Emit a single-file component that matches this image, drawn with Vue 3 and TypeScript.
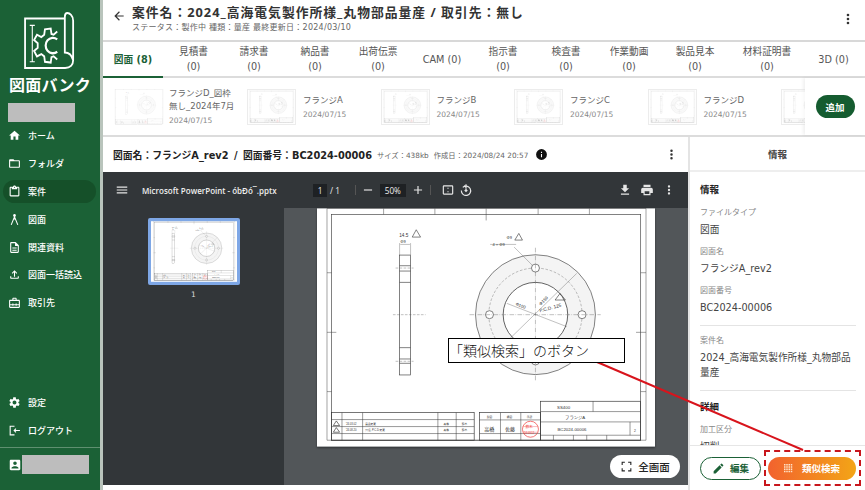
<script setup lang="ts">
interface NavItem {
  label: string
  icon: string
  active?: boolean
}

const navTop: NavItem[] = [
  { label: 'ホーム', icon: 'M10 20v-6h4v6h5v-8h3L12 3 2 12h3v8z' },
  { label: 'フォルダ', icon: 'M20 6h-8l-2-2H4c-1.1 0-1.99.9-1.99 2L2 18c0 1.1.9 2 2 2h16c1.1 0 2-.9 2-2V8c0-1.1-.9-2-2-2zm0 12H4V8h16v10z' },
  { label: '案件', active: true, icon: 'M19 3h-4.18C14.4 1.84 13.3 1 12 1s-2.4.84-2.82 2H5c-1.1 0-2 .9-2 2v14c0 1.1.9 2 2 2h14c1.1 0 2-.9 2-2V5c0-1.1-.9-2-2-2zm-7 0c.55 0 1 .45 1 1s-.45 1-1 1-1-.45-1-1 .45-1 1-1zm7 16H5V5h2v3h10V5h2v14z' },
  { label: '図面', icon: 'M12 2a2.6 2.6 0 0 0-1 5L5 21.5l1.8.8L11 12h2l4.2 10.3 1.8-.8L13 7a2.6 2.6 0 0 0-1-5z' },
  { label: '関連資料', icon: 'M8 16h8v2H8zm0-4h8v2H8zm6-10H6c-1.1 0-2 .9-2 2v16c0 1.1.89 2 1.99 2H18c1.1 0 2-.9 2-2V8l-6-6zm4 18H6V4h7v5h5v11z' },
  { label: '図面一括読込', icon: 'M18 15v3H6v-3H4v3c0 1.1.9 2 2 2h12c1.1 0 2-.9 2-2v-3h-2zM7 9l1.41 1.41L11 7.83V16h2V7.83l2.59 2.58L17 9l-5-5-5 5z' },
  { label: '取引先', icon: 'M20 7h-4V5c0-1.1-.9-2-2-2h-4c-1.1 0-2 .9-2 2v2H4c-1.1 0-2 .9-2 2v11c0 1.1.9 2 2 2h16c1.1 0 2-.9 2-2V9c0-1.1-.9-2-2-2zM10 5h4v2h-4V5zm10 15H4v-3h4v1h2v-1h4v1h2v-1h4v3zm0-5h-4v-1h-2v1h-4v-1H8v1H4V9h16v6z' },
]

const navBottom: NavItem[] = [
  { label: '設定', icon: 'M19.14 12.94c.04-.3.06-.61.06-.94 0-.32-.02-.64-.07-.94l2.03-1.58c.18-.14.23-.41.12-.61l-1.92-3.32c-.12-.22-.37-.29-.59-.22l-2.39.96c-.5-.38-1.03-.7-1.62-.94l-.36-2.54c-.04-.24-.24-.41-.48-.41h-3.84c-.24 0-.43.17-.47.41l-.36 2.54c-.59.24-1.13.57-1.62.94l-2.39-.96c-.22-.08-.47 0-.59.22L2.74 8.87c-.12.21-.08.47.12.61l2.03 1.58c-.05.3-.09.63-.09.94s.02.64.07.94l-2.03 1.58c-.18.14-.23.41-.12.61l1.92 3.32c.12.22.37.29.59.22l2.39-.96c.5.38 1.03.7 1.62.94l.36 2.54c.05.24.24.41.48.41h3.84c.24 0 .44-.17.47-.41l.36-2.54c.59-.24 1.13-.56 1.62-.94l2.39.96c.22.08.47 0 .59-.22l1.92-3.32c.12-.22.07-.47-.12-.61l-2.01-1.58zM12 15.6c-1.98 0-3.6-1.62-3.6-3.6s1.62-3.6 3.6-3.6 3.6 1.62 3.6 3.6-1.62 3.6-3.6 3.6z' },
  { label: 'ログアウト', icon: 'M3 3h9v2H5v14h7v2H3zM14 8l1.4 1.4-1.6 1.6H22v2h-8.2l1.6 1.6L14 16l-4-4z' },
]

const tabs = [
  { label: '図面 (8)', width: 60, active: true },
  { label: '見積書', count: '(0)', width: 61 },
  { label: '請求書', count: '(0)', width: 60 },
  { label: '納品書', count: '(0)', width: 62 },
  { label: '出荷伝票', count: '(0)', width: 64 },
  { label: 'CAM (0)', width: 64 },
  { label: '指示書', count: '(0)', width: 58 },
  { label: '検査書', count: '(0)', width: 68 },
  { label: '作業動画', count: '(0)', width: 58 },
  { label: '製品見本', count: '(0)', width: 74 },
  { label: '材料証明書', count: '(0)', width: 70 },
  { label: '3D (0)', width: 63 },
]

const thumbs = [
  { name: 'フランジD_図枠無し_2024年7月', date: '2024/07/15', bare: true },
  { name: 'フランジA', date: '2024/07/15' },
  { name: 'フランジB', date: '2024/07/15' },
  { name: 'フランジC', date: '2024/07/15' },
  { name: 'フランジD', date: '2024/07/15' },
  { name: '', date: '' },
]

const infoRows = [
  { label: 'ファイルタイプ', value: '図面' },
  { label: '図面名', value: 'フランジA_rev2' },
  { label: '図面番号', value: 'BC2024-00006' },
]
</script>

<template>
  <div class="app">
    <aside class="side">
      <svg class="logo" viewBox="3 3 166 168" preserveAspectRatio="none" fill="none" stroke="#fff" stroke-width="5">
        <path d="M127 30H17V158H128C142 158 150 150 150 138V36C150 22 140 16 134 16C130 16 127 20 127 26V118C136 118 146 124 150 138" />
        <path d="M30 48h14M37 48V142M30 142h14" stroke-width="3" />
        <path d="M106 64L96 72L90 70L88 56L72 58L70 72L62 78L50 72L42 86L52 94L52 106L42 114L50 128L62 122L70 128L72 142L88 144L90 130L96 128L106 136" />
        <path d="M106 84A20 20 0 1 0 106 116" stroke-width="6" />
      </svg>
      <div class="brand">図面バンク</div>
      <div class="mask mask-org"></div>
      <nav class="nav">
        <a v-for="item in navTop" :key="item.label" class="nav-item" :class="{ 'nav-item--active': item.active }">
          <svg viewBox="0 0 24 24" class="nav-icon"><path :d="item.icon" /></svg>
          <span>{{ item.label }}</span>
        </a>
      </nav>
      <nav class="nav nav-bottom">
        <a v-for="item in navBottom" :key="item.label" class="nav-item">
          <svg viewBox="0 0 24 24" class="nav-icon"><path :d="item.icon" /></svg>
          <span>{{ item.label }}</span>
        </a>
      </nav>
      <div class="user">
        <svg viewBox="0 0 24 24" class="user-icon"><path d="M19 3H5c-1.1 0-2 .9-2 2v14c0 1.1.9 2 2 2h14c1.1 0 2-.9 2-2V5c0-1.1-.9-2-2-2zm-7 3c1.65 0 3 1.35 3 3s-1.35 3-3 3-3-1.35-3-3 1.35-3 3-3zm6 12H6v-.75c0-2 4-3.1 6-3.1s6 1.1 6 3.1V18z" /></svg>
        <div class="mask mask-user"></div>
      </div>
    </aside>

    <main class="main">
      <header class="head">
        <svg class="back" viewBox="0 0 24 24"><path d="M20 11H7.83l5.59-5.59L12 4l-8 8 8 8 1.41-1.41L7.83 13H20z" /></svg>
        <div class="head-text">
          <h1>案件名：2024_高海電気製作所様_丸物部品量産 / 取引先：無し</h1>
          <p>ステータス：製作中 種類：量産 最終更新日：2024/03/10</p>
        </div>
        <svg class="kebab" viewBox="0 0 24 24"><path d="M12 8a2 2 0 1 0 0-4 2 2 0 0 0 0 4zm0 2a2 2 0 1 0 0 4 2 2 0 0 0 0-4zm0 6a2 2 0 1 0 0 4 2 2 0 0 0 0-4z" /></svg>
      </header>

      <div class="tabs">
        <div
          v-for="tab in tabs"
          :key="tab.label"
          class="tab"
          :class="{ 'tab--active': tab.active }"
          :style="{ width: tab.width + 'px' }"
        >
          <span>{{ tab.label }}</span>
          <span v-if="tab.count">{{ tab.count }}</span>
        </div>
      </div>

      <div class="thumbs">
        <div class="thumb-list">
          <div v-for="(t, i) in thumbs" :key="i" class="thumb" :class="{ 'thumb--bare': t.bare }">
            <svg class="thumb-img" viewBox="20 10 1015 715"><use href="#sheet" /></svg>
            <div class="thumb-text">
              <div class="thumb-name">{{ t.name }}</div>
              <div class="thumb-date">{{ t.date }}</div>
            </div>
          </div>
        </div>
        <div class="add-zone"><button class="add">追加</button></div>
      </div>

      <div class="work">
        <section class="doc">
          <div class="doc-head">
            <strong>図面名：フランジA_rev2 / 図面番号：BC2024-00006</strong>
            <span class="doc-meta">サイズ：438kb</span>
            <span class="doc-meta">作成日：2024/08/24 20:57</span>
            <svg class="info-icon" viewBox="0 0 24 24"><path d="M12 2a10 10 0 1 0 0 20 10 10 0 0 0 0-20zm1 15h-2v-6h2zm0-8h-2V7h2z" /></svg>
            <svg class="doc-kebab" viewBox="0 0 24 24"><path d="M12 8a2 2 0 1 0 0-4 2 2 0 0 0 0 4zm0 2a2 2 0 1 0 0 4 2 2 0 0 0 0-4zm0 6a2 2 0 1 0 0 4 2 2 0 0 0 0-4z" /></svg>
          </div>

          <div class="viewer">
            <div class="pdf-bar">
              <svg class="pdf-icon pdf-menu" viewBox="0 0 24 24"><path d="M3 18h18v-2H3zm0-5h18v-2H3zm0-7v2h18V6z" /></svg>
              <span class="pdf-title">Microsoft PowerPoint - óbÐó¯.pptx</span>
              <span class="pdf-box pdf-page">1</span>
              <span class="pdf-of">/ 1</span>
              <i class="pdf-sep"></i>
              <svg class="pdf-icon" viewBox="0 0 24 24"><path d="M5 11h14v2H5z" /></svg>
              <span class="pdf-box pdf-zoom">50%</span>
              <svg class="pdf-icon" viewBox="0 0 24 24"><path d="M19 13h-6v6h-2v-6H5v-2h6V5h2v6h6z" /></svg>
              <i class="pdf-sep"></i>
              <svg class="pdf-icon pdf-fit" viewBox="0 0 24 24"><path d="M19 4H5a2 2 0 0 0-2 2v12a2 2 0 0 0 2 2h14a2 2 0 0 0 2-2V6a2 2 0 0 0-2-2zm0 14H5V6h14zM11 8h2v2h-2zM11 14h2v2h-2z" /></svg>
              <svg class="pdf-icon pdf-rotate" viewBox="0 0 24 24"><path d="M6.500 7.500A8 8 0 1 1 4 13" /><path d="M12 2v8M9 4.500l3 3" /><path class="rotate-dot" d="M12 10l3 3-3 3-3-3z" /></svg>
              <span class="pdf-gap"></span>
              <svg class="pdf-icon pdf-end" viewBox="0 0 24 24"><path d="M19 9h-4V3H9v6H5l7 7zM5 18v2h14v-2z" /></svg>
              <svg class="pdf-icon pdf-end" viewBox="0 0 24 24"><path d="M19 8H5a3 3 0 0 0-3 3v6h4v4h12v-4h4v-6a3 3 0 0 0-3-3zm-3 11H8v-5h8zM18 3H6v4h12z" /></svg>
              <svg class="pdf-icon pdf-end" viewBox="0 0 24 24"><path d="M12 8a2 2 0 1 0 0-4 2 2 0 0 0 0 4zm0 2a2 2 0 1 0 0 4 2 2 0 0 0 0-4zm0 6a2 2 0 1 0 0 4 2 2 0 0 0 0-4z" /></svg>
            </div>
            <div class="pdf-body">
              <div class="pdf-side">
                <div class="pdf-thumb">
                  <svg viewBox="20 10 1015 715"><use href="#sheet" /></svg>
                </div>
                <span>1</span>
              </div>
              <div class="pdf-canvas">
                <svg class="sheet" viewBox="20 10 1015 715">
                  <defs>
                    <g id="sheet">
                      <rect x="20" y="10" width="1015" height="715" fill="#fff" />
                      <g fill="none" stroke="#444" stroke-width="2">
                        <rect x="64" y="28" width="928" height="678" />
                        <path d="M50 10v696M50 10h958v696H50M220 10v18M374 10v18M528 10v36M684 10v18M838 10v18M50 203h14M50 382h28M50 560h14M992 203h16M978 382h30M992 560h16" stroke-width="1.500" />
                        <rect x="268" y="150" width="33" height="360" />
                        <path d="M268 182h33M268 198h33M268 232h33M268 428h33M268 462h33M268 475h33" />
                        <path d="M248 329h98M256 189h54M256 469h54" stroke-dasharray="8 4" stroke-width="1" />
                        <path d="M268 150v-36M301 150v-36M270 118h29" stroke-width="1" />
                        <circle cx="676" cy="329" r="180" fill="#f4f4f4" />
                        <circle cx="676" cy="329" r="97" fill="#fff" stroke-width="2.500" />
                        <circle cx="676" cy="329" r="140" stroke-dasharray="8 5" stroke-width="1" />
                        <circle cx="676" cy="189" r="12" fill="#fff" />
                        <circle cx="816" cy="329" r="12" fill="#fff" />
                        <circle cx="538" cy="329" r="12" fill="#fff" />
                        <circle cx="676" cy="468" r="12" fill="#fff" />
                        <path d="M676 128v400M478 329h394" stroke-dasharray="14 4 2 4" stroke-width="1" />
                        <path d="M612 126l54 54M800 205L600 400M590 295l180 70M540 118h78" stroke-width="1" />
                        <path d="M306 96l12-22 13 22zM614 105l12-20 11 20zM735 285l15-20 16 20z" />
                      </g>
                      <g font-family="Liberation Sans, sans-serif" fill="#333">
                        <text x="267" y="95" font-size="14">14.5</text>
                        <text x="270" y="114" font-size="12">Φ9</text>
                        <text x="589" y="103" font-size="12">Φ9</text>
                        <text x="547" y="123" font-size="12">4 × Φ9</text>
                        <text x="615" y="300" font-size="13" transform="rotate(22 615 300)">Φ100</text>
                        <text x="692" y="302" font-size="13" transform="rotate(-45 692 302)">Φ150</text>
                        <text x="690" y="322" font-size="14" transform="rotate(-15 690 322)">P.C.D. 125</text>
                      </g>
                      <g fill="none" stroke="#333" stroke-width="2">
                        <rect x="64" y="623" width="428" height="83" />
                        <path d="M64 644h428M64 665h428M64 686h428M95 623v83M157 623v83M383 623v83M438 623v83" stroke-width="1.500" />
                        <rect x="508" y="623" width="183" height="83" />
                        <path d="M508 645h183M508 686h183M571 623v83M632 623v83" stroke-width="1.500" />
                        <rect x="691" y="589" width="300" height="117" />
                        <path d="M691 620h300M691 651h300M691 691h300M849 589v31M960 651v40M730 691v15M790 691v15M830 691v15M890 691v15" stroke-width="1.500" />
                        <path d="M69 662l9-14 10 14zM69 682l9-14 10 14z" />
                        <circle cx="661" cy="673" r="24" stroke="#e33" />
                        <path d="M639 665h44M639 682h44" stroke="#e33" stroke-width="1" />
                      </g>
                      <g font-family="Liberation Sans, Noto Sans CJK JP, sans-serif" fill="#333" font-size="8">
                        <text x="106" y="659">'24.03.02</text>
                        <text x="165" y="659">異品変更</text>
                        <text x="106" y="678">'24.08.20</text>
                        <text x="165" y="678">穴径, P.C.D.変更</text>
                        <text x="400" y="659">高橋</text><text x="455" y="659">鈴木</text>
                        <text x="400" y="678">高橋</text><text x="455" y="678">鈴木</text>
                        <text x="530" y="640">製図</text><text x="590" y="640">検図</text><text x="650" y="640">承認</text>
                        <text x="522" y="677" font-size="15">高橋</text>
                        <text x="585" y="677" font-size="15">佐藤</text>
                        <text x="646" y="670" font-size="11" fill="#e33">鈴木</text>
                        <text x="640" y="686" font-size="8" fill="#e33">'24.03.12</text>
                        <text x="741" y="612" font-size="13">SS400</text>
                        <text x="765" y="641" font-size="13">フランジA</text>
                        <text x="742" y="677" font-size="13">BC2024-00006</text>
                        <text x="972" y="681" font-size="10">2</text>
                      </g>
                    </g>
                  </defs>
                  <use href="#sheet" />
                </svg>
              </div>
            </div>
            <button class="full">
              <svg viewBox="0 0 24 24"><path d="M3 9V3h6v2H5v4zM15 3h6v6h-2V5h-4zM21 15v6h-6v-2h4v-4zM9 21H3v-6h2v4h4z" /></svg>
              全画面
            </button>
          </div>
        </section>

        <aside class="panel">
          <div class="panel-head">情報</div>
          <div class="panel-body">
            <h3>情報</h3>
            <dl v-for="row in infoRows" :key="row.label">
              <dt>{{ row.label }}</dt>
              <dd>{{ row.value }}</dd>
            </dl>
            <hr />
            <dl>
              <dt>案件名</dt>
              <dd>2024_高海電気製作所様_丸物部品量産</dd>
            </dl>
            <hr />
            <h3>詳細</h3>
            <dl>
              <dt>加工区分</dt>
              <dd>切削</dd>
            </dl>
          </div>
          <div class="panel-foot">
            <button class="edit">
              <svg viewBox="0 0 24 24"><path d="M3 17.25V21h3.75L17.81 9.94l-3.75-3.75L3 17.25zM20.71 7.04a1 1 0 0 0 0-1.41l-2.34-2.34a1 1 0 0 0-1.41 0l-1.83 1.83 3.75 3.75 1.83-1.83z" /></svg>
              編集
            </button>
            <button class="similar">
              <svg viewBox="0 0 12 12"><path d="M0 0h2v2H0zM3 0h2v2H3zM6 0h2v2H6zM9 0h2v2H9zM0 3h2v2H0zM3 3h2v2H3zM6 3h2v2H6zM9 3h2v2H9zM0 6h2v2H0zM3 6h2v2H3zM6 6h2v2H6zM9 6h2v2H9zM0 9h2v2H0zM3 9h2v2H3zM6 9h2v2H6zM9 9h2v2H9z" /></svg>
              類似検索
            </button>
          </div>
        </aside>
      </div>
    </main>

    <!-- annotation drawn over the screenshot -->
    <svg class="arrow" viewBox="0 0 865 490"><path d="M597 362L803 450" /></svg>
    <div class="callout">「類似検索」のボタン</div>
    <div class="dashed"></div>
  </div>
</template>

<style scoped>
.app {
  position: relative;
  display: flex;
  width: 865px;
  height: 490px;
  overflow: hidden;
  background: #fff;
  color: #333;
  font-family: "DejaVu Sans", "Noto Sans CJK JP", sans-serif;
}

.side {
  width: 100px;
  flex: none;
  display: flex;
  flex-direction: column;
  background: #1b6136;
  color: #fff;
  border-right: 3px solid #b9c4bc;
}
.logo { width: 60px; height: 65px; margin: 8px 0 0 20px; display: block; flex: none; }
.brand {
  margin-top: 2px;
  text-align: center;
  font-size: 16px;
  line-height: 18px;
  font-weight: 700;
  font-family: "Noto Sans CJK JP", sans-serif;
  letter-spacing: 0.2px;
}
.mask { background: #bdbdbd; }
.mask-org { width: 67px; height: 19px; margin: 10px 0 0 8px; flex: none; }
.nav { display: flex; flex-direction: column; }
.nav-bottom { margin-top: auto; }
.nav-item {
  display: flex;
  align-items: center;
  height: 27.8px;
  margin: 0 4px 0 3px;
  padding-left: 5px;
  gap: 7px;
  font-size: 9px;
  font-weight: 500;
  border-radius: 12px;
}
.nav-item--active { background: #155029; height: 23px; margin: 2.4px 4px 2.4px 3px; }
.nav-icon { width: 13px; height: 13px; fill: #fff; flex: none; }
.user {
  display: flex;
  align-items: center;
  height: 33px;
  margin-top: 3px;
  padding: 0 0 9px 8px;
  border-top: 1px solid #5f9070;
  flex: none;
}
.user-icon { width: 14px; height: 14px; fill: #fff; flex: none; }
.mask-user { width: 67px; height: 19px; }

.main { flex: 1; min-width: 0; display: flex; flex-direction: column; }
.head {
  height: 37px;
  flex: none;
  display: flex;
  align-items: flex-start;
  padding: 3px 9px 0 9px;
  border-bottom: 2px solid #d8d8d8;
}
.back { width: 14px; height: 14px; margin-top: 6px; flex: none; fill: #333; }
.head-text { margin-left: 6px; flex: 1; }
.head-text h1 {
  margin: 0;
  font-family: "Open Sans", "Noto Sans CJK JP", sans-serif;
  font-size: 12.8px;
  line-height: 18px;
  font-weight: 700;
  letter-spacing: 1px;
  color: #333;
}
.head-text p { margin: 1px 0 0; font-size: 8px; line-height: 11px; color: #666; letter-spacing: 0.25px; }
.kebab { width: 16px; height: 16px; fill: #333; margin-top: 8px; }

.tabs {
  display: flex;
  height: 34px;
  flex: none;
  border-bottom: 2px solid #dcdcdc;
}
.tab {
  flex: none;
  display: flex;
  flex-direction: column;
  align-items: center;
  justify-content: center;
  font-size: 9.7px;
  line-height: 15px;
  color: #555;
  white-space: nowrap;
}
.tab--active {
  color: #1b6136;
  font-weight: 700;
  border-bottom: 2px solid #1b6136;
  margin-bottom: -2px;
}

.thumbs { height: 57px; flex: none; display: flex; position: relative; }
.thumb-list { flex: 1; min-width: 0; display: flex; overflow: hidden; padding-left: 10px; }
.thumb { flex: none; width: 133.5px; display: flex; align-items: center; }
.thumb--bare { width: 134px; }
.thumb-img {
  width: 49px;
  height: 36px;
  flex: none;
  border: 1px solid #ddd;
  box-sizing: border-box;
  opacity: 0.55;
  margin-right: 7px;
}
.thumb--bare .thumb-img { width: 52px; border: none; margin-right: 4px; opacity: 0.4; }
.thumb-name { font-size: 8.5px; line-height: 13px; color: #666; width: 68px; }
.thumb-date { font-size: 7.5px; line-height: 11px; color: #888; margin-top: 2px; }
.add-zone {
  width: 60px;
  flex: none;
  display: flex;
  align-items: center;
  justify-content: center;
  box-shadow: -2px 0 3px rgba(0, 0, 0, 0.06);
  background: #fff;
}
.add {
  width: 39px;
  height: 23px;
  border: none;
  border-radius: 12px;
  background: #155c30;
  color: #fff;
  font: 700 9.5px "Noto Sans CJK JP", sans-serif;
  padding: 0;
}

.work { flex: 1; min-height: 0; display: flex; border-top: 2px solid #dcdcdc; }
.doc { width: 585px; flex: none; display: flex; flex-direction: column; border-right: 2px solid #e4e4e4; }
.doc-head {
  height: 35px;
  flex: none;
  display: flex;
  align-items: center;
  padding: 0 9px 0 10px;
  font-size: 7.3px;
  color: #666;
}
.doc-head strong { font-size: 9.8px; word-spacing: 2px; color: #222; margin-right: 5px; }
.doc-meta { margin-right: 5px; }
.info-icon { width: 13px; height: 13px; fill: #111; margin-left: 2px; }
.doc-kebab { width: 15px; height: 15px; fill: #333; margin-left: auto; }

.viewer { position: relative; height: 313px; flex: none; display: flex; flex-direction: column; background: #525659; }
.pdf-bar {
  height: 36px;
  flex: none;
  display: flex;
  align-items: center;
  padding-right: 8px;
  background: #323639;
  color: #eee;
  font-size: 8.2px;
  font-family: "Open Sans", sans-serif;
  font-weight: 600;
}
.pdf-icon { width: 14px; height: 14px; fill: #e6e6e6; flex: none; margin: 0 5px; }
.pdf-menu { margin: 0 0 0 12px; }
.pdf-title { width: 171px; margin-left: 13px; white-space: nowrap; font-size: 8px; }
.pdf-box { background: #1e2124; height: 13px; line-height: 13px; text-align: center; font-weight: 400; }
.pdf-page { width: 14px; }
.pdf-of { margin: 0 15px 0 3px; font-weight: 400; white-space: nowrap; }
.pdf-zoom { width: 26px; }
.pdf-sep { width: 1px; height: 10px; background: #555; flex: none; }
.pdf-fit { margin: 0 4px 0 10px; }
.pdf-rotate { margin: 0; fill: none; stroke: #e6e6e6; stroke-width: 2; }
.rotate-dot { fill: #e6e6e6; stroke: none; }
.pdf-gap { flex: 1; }
.pdf-end { margin: 0 4px; }

.pdf-body { flex: 1; min-height: 0; display: flex; }
.pdf-side {
  width: 181px;
  flex: none;
  background: #323639;
  color: #ddd;
  font-size: 7.5px;
  text-align: center;
  padding-top: 10px;
  box-sizing: border-box;
}
.pdf-thumb {
  width: 92px;
  height: 67px;
  margin: 0 auto 5px;
  box-sizing: border-box;
  border: 3px solid #7ea7e6;
  background: #7ea7e6;
  border-radius: 2px;
}
.pdf-thumb svg { display: block; width: 100%; height: 100%; }
.pdf-canvas {
  flex: 1;
  min-width: 0;
  padding: 0 0 0 33px;
}
.sheet { display: block; width: 338px; height: 239px; box-shadow: 0 1px 2px rgba(0, 0, 0, 0.4); }
.full {
  position: absolute;
  right: 8px;
  bottom: 7px;
  width: 70px;
  height: 23px;
  border: none;
  border-radius: 12px;
  background: #fff;
  color: #222;
  font: 500 10.5px "Noto Sans CJK JP", sans-serif;
  display: flex;
  align-items: center;
  justify-content: center;
  gap: 5px;
  padding: 0;
}
.full svg { width: 13px; height: 13px; fill: #222; }

.panel { flex: 1; min-width: 0; display: flex; flex-direction: column; }
.panel-head {
  height: 35px;
  flex: none;
  display: flex;
  align-items: center;
  justify-content: center;
  font-size: 9.5px;
  font-weight: 700;
  color: #444;
  border-bottom: 2px solid #eee;
  box-sizing: border-box;
}
.panel-body { flex: 1; min-height: 0; overflow: hidden; padding: 11px 9px 0 10px; }
.panel-body h3 { margin: 0; font-size: 9.5px; line-height: 14px; font-weight: 700; color: #222; }
.panel-body dl { margin: 9px 0 0; }
.panel-body h3 + dl { margin-top: 10px; }
.panel-body dt { font-size: 8px; line-height: 12px; color: #888; }
.panel-body dd { margin: 3px 0 0; font-size: 9.7px; line-height: 15px; color: #444; }
.panel-body hr { border: none; border-top: 1px solid #e4e4e4; margin: 10px 0 0; }
.panel-body h3:not(:first-child) { margin-top: 9px; }
.panel-foot {
  height: 45px;
  flex: none;
  box-sizing: border-box;
  display: flex;
  align-items: center;
  padding: 0 9px 0 10px;
  border-top: 1px solid #e6e6e6;
  gap: 7px;
}
.panel-foot button { height: 23px; border-radius: 12px; display: flex; align-items: center; justify-content: center; padding: 0; font: 700 9.5px "Noto Sans CJK JP", sans-serif; }
.edit { width: 61px; flex: none; gap: 5px; background: #fff; color: #1b6136; border: 1px solid #1b6136; }
.edit svg { width: 13px; height: 13px; fill: #1b6136; }
.similar { flex: 1; gap: 9px; border: none; color: #fff; background: linear-gradient(90deg, #f2622e, #f3a516); }
.similar svg { width: 9px; height: 9px; fill: #ffe2c8; }

.arrow { position: absolute; inset: 0; width: 865px; height: 490px; pointer-events: none; }
.arrow path { fill: none; stroke: #d8141c; stroke-width: 2; }
.callout {
  position: absolute;
  left: 448px;
  top: 338px;
  width: 177px;
  height: 25px;
  box-sizing: border-box;
  border: 1px solid #000;
  background: #fff;
  color: #111;
  font: 300 14px/23px "Noto Sans CJK JP", sans-serif;
  white-space: nowrap;
}
.dashed {
  position: absolute;
  left: 764px;
  top: 450px;
  width: 97px;
  height: 36px;
  box-sizing: border-box;
  border: 2px dashed #c8161d;
}
</style>

<style>
html, body { margin: 0; background: #fff; overflow: hidden; }
</style>
